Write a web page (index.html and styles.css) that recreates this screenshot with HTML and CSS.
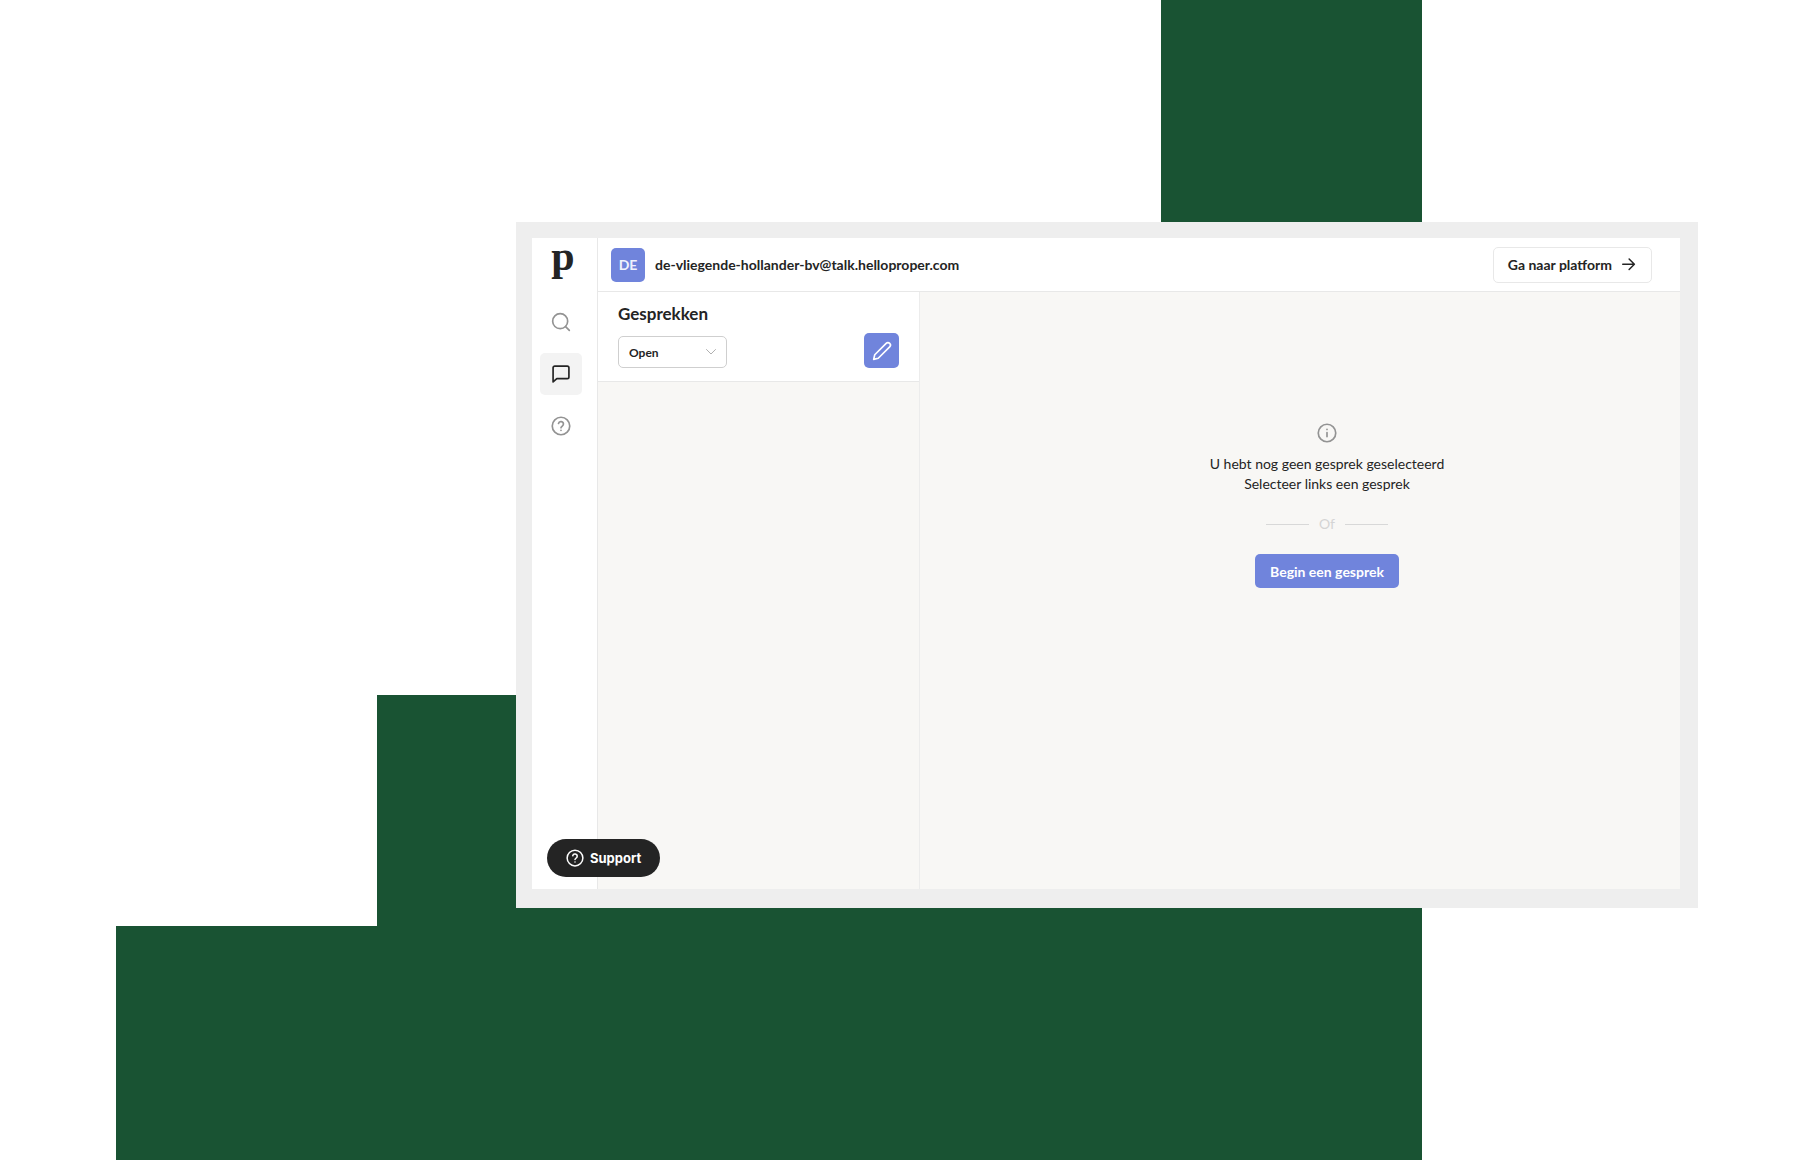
FILE: index.html
```html
<!DOCTYPE html>
<html lang="nl">
<head>
    <meta charset="UTF-8">
    <meta name="viewport" content="width=device-width, initial-scale=1.0">
    <title>Gesprekken</title>
    <link rel="stylesheet" href="styles.css">
</head>
<body>
    <div class="scene">
        <div class="block block-tall"></div>
        <div class="block block-middle"></div>
        <div class="block block-bottom"></div>

        <div class="frame">
            <div class="app">
                <nav class="sidebar">
                    <a href="#" class="logo" aria-label="Home">p</a>
                    <a href="#" class="nav-item" aria-label="Zoeken">
                        <svg class="icon" viewBox="0 0 24 24"><circle cx="11" cy="11" r="9"/><path d="M17.5 17.5L22 22"/></svg>
                    </a>
                    <a href="#" class="nav-item active" aria-label="Gesprekken">
                        <svg class="icon" viewBox="0 0 24 24"><path d="M21.5 15.5a2 2 0 0 1-2 2H7L2.500 21.500V4.500a2 2 0 0 1 2-2h15a2 2 0 0 1 2 2z"/></svg>
                    </a>
                    <a href="#" class="nav-item" aria-label="Hulp">
                        <svg class="icon" viewBox="0 0 24 24"><circle cx="12" cy="12" r="10.5"/><path d="M9 9a3 3 0 0 1 5.9 1c0 2-2.9 2.600-2.900 4M12 17.200v.2"/></svg>
                    </a>
                </nav>

                <div class="main">
                    <header class="topbar">
                        <span class="avatar">DE</span>
                        <span class="email">de-vliegende-hollander-bv@talk.helloproper.com</span>
                        <a href="#" class="platform">
                            Ga naar platform
                            <svg class="icon-small" viewBox="0 0 24 24"><path d="M5 11h15M13.500 4l7 7-7 7"/></svg>
                        </a>
                    </header>

                    <div class="content">
                        <section class="list">
                            <div class="list-header">
                                <h1>Gesprekken</h1>
                                <div class="filters">
                                    <div class="select">
                                        <select aria-label="Status">
                                            <option>Open</option>
                                            <option>Gesloten</option>
                                        </select>
                                        <svg class="chevron" viewBox="0 0 12 12"><path d="M1.500 3.500L6 8l4.500-4.500"/></svg>
                                    </div>
                                    <button class="compose" aria-label="Nieuw gesprek">
                                        <svg class="icon" viewBox="0 0 24 24"><path d="M17 2.800a2.800 2.800 0 0 1 4.200 4.200L7.500 20.700 2 22l1.300-5.500z"/></svg>
                                    </button>
                                </div>
                            </div>
                        </section>

                        <section class="empty">
                            <svg class="icon info" viewBox="0 0 24 24"><circle cx="12" cy="12" r="10.5"/><path d="M12 11.500v5M12 7.500v.2"/></svg>
                            <p>U hebt nog geen gesprek geselecteerd<br>Selecteer links een gesprek</p>
                            <div class="divider">Of</div>
                            <button class="start">Begin een gesprek</button>
                        </section>
                    </div>
                </div>

                <button class="support">
                    <svg class="icon-small" viewBox="0 0 24 24"><circle cx="12" cy="12" r="10.5"/><path d="M9 9a3 3 0 0 1 5.900 1c0 2-2.900 2.600-2.900 4M12 17.200v.2"/></svg>
                    Support
                </button>
            </div>
        </div>
    </div>
</body>
</html>
```
FILE: styles.css
```css
* {
    box-sizing: border-box;
}
body {
    margin: 0;
    background-color: #ffffff;
    color: #242424;
    font-family: Lato, sans-serif;
    font-size: 14px;
}
a {
    color: inherit;
    text-decoration: none;
}
button, select {
    font-family: inherit;
    font-size: 14px;
    font-weight: bold;
    cursor: pointer;
}
svg {
    display: block;
    flex: none;
    fill: none;
    stroke: currentColor;
    stroke-width: 2;
    stroke-linecap: round;
    stroke-linejoin: round;
}

/* Green blocks and the app window share one grid */
.scene {
    display: grid;
    grid-template-columns: 116fr 261fr 139fr 645fr 261fr 276fr 114fr;
    grid-template-rows: 222fr 473fr 213fr 18fr 234fr;
    min-height: 100vh;
}
.block {
    background-color: #195333;
}
.block-tall {
    grid-area: 1 / 5 / 6 / 6;
}
.block-middle {
    grid-area: 3 / 3 / 6 / 6;
}
.block-bottom {
    grid-area: 5 / 2 / 6 / 6;
}
.frame {
    grid-area: 2 / 4 / 4 / 7;
    display: flex;
    padding: 16px 18px 19px 16px;
    background-color: #eeeeee;
}
.app {
    position: relative;
    display: flex;
    flex: 1;
    background-color: #ffffff;
}

/* Sidebar */
.sidebar {
    display: flex;
    flex-direction: column;
    align-items: center;
    gap: 10px;
    width: 66px;
    padding-right: 7px;
    border-right: 1px solid #e8e8e8;
}
.logo {
    height: 53px;
    padding-left: 4px;
    font-family: "Liberation Serif", serif;
    font-size: 42px;
    font-weight: bold;
    line-height: 36px;
}
.nav-item {
    display: flex;
    align-items: center;
    justify-content: center;
    width: 42px;
    height: 42px;
    border-radius: 5px;
    color: #939393;
}
.nav-item.active {
    background-color: #f3f3f3;
    color: #242424;
}
.icon {
    width: 20px;
    height: 20px;
}
.icon-small {
    width: 18px;
    height: 18px;
}

/* Top bar */
.main {
    display: flex;
    flex: 1;
    flex-direction: column;
}
.topbar {
    display: flex;
    align-items: center;
    gap: 10px;
    height: 54px;
    padding: 0 28px 0 13px;
    border-bottom: 1px solid #e8e8e8;
}
.avatar {
    display: flex;
    align-items: center;
    justify-content: center;
    width: 34px;
    height: 34px;
    border-radius: 5px;
    background-color: #7084dc;
    color: #f0f2fc;
    font-weight: bold;
}
.email {
    font-weight: bold;
}
.platform {
    display: flex;
    align-items: center;
    gap: 7px;
    height: 36px;
    margin-left: auto;
    padding: 0 14px;
    border: 1px solid #e8e8e8;
    border-radius: 5px;
    font-weight: bold;
}

/* Conversations */
.content {
    display: flex;
    flex: 1;
}
.list {
    width: 322px;
    border-right: 1px solid #ececec;
    background-color: #f8f7f5;
}
.list-header {
    padding: 12px 20px 13px;
    border-bottom: 1px solid #e8e8e8;
    background-color: #ffffff;
}
h1 {
    margin: 0;
    font-size: 17px;
    line-height: 20px;
}
.filters {
    display: flex;
    align-items: flex-end;
    justify-content: space-between;
    margin-top: 9px;
}
.select {
    position: relative;
}
select {
    width: 109px;
    height: 32px;
    padding: 0 10px;
    border: 1px solid #cfcfcf;
    border-radius: 5px;
    background-color: #ffffff;
    color: #242424;
    font-size: 12px;
    appearance: none;
}
.chevron {
    position: absolute;
    top: 10px;
    right: 10px;
    width: 12px;
    height: 12px;
    stroke: #b0b0b0;
    stroke-width: 1;
    pointer-events: none;
}
.compose {
    display: flex;
    align-items: center;
    justify-content: center;
    width: 35px;
    height: 35px;
    padding: 0;
    border: none;
    border-radius: 5px;
    background-color: #7084dc;
    color: #ffffff;
}

/* Empty state */
.empty {
    display: flex;
    flex: 1;
    flex-direction: column;
    align-items: center;
    padding: 131px 0 32px 54px;
    background-color: #f8f7f5;
}
.info {
    color: #939393;
}
.empty p {
    margin: 11px 0 20px;
    line-height: 20px;
    text-align: center;
}
.divider {
    display: flex;
    align-items: center;
    gap: 10px;
    margin-bottom: 20px;
    color: #d4d4d4;
    line-height: 20px;
}
.divider::before, .divider::after {
    width: 43px;
    height: 1px;
    background-color: #d8d8d8;
    content: "";
}
.start {
    height: 34px;
    padding: 0 15px;
    border: none;
    border-radius: 5px;
    background-color: #7084dc;
    color: #ffffff;
}

/* Support button floats over the sidebar edge */
.support {
    position: absolute;
    bottom: 12px;
    left: 15px;
    display: flex;
    align-items: center;
    gap: 6px;
    height: 38px;
    padding: 0 19px;
    border: none;
    border-radius: 19px;
    background-color: #242424;
    color: #ffffff;
    font-family: Inter, sans-serif;
    font-size: 13px;
}
```
